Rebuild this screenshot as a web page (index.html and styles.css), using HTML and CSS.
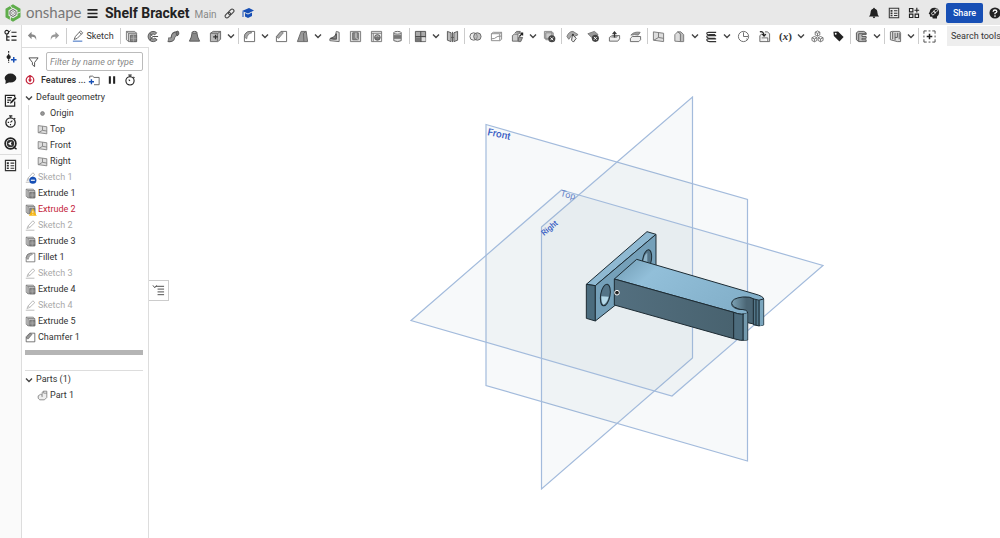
FILE: index.html
```
<!DOCTYPE html>
<html lang="en">
<head>
    <meta charset="UTF-8">
    <meta name="viewport" content="width=device-width, initial-scale=1.0">
    <title>Shelf Bracket | Main</title>
    <link rel="stylesheet" href="styles.css">
</head>
<body>
    <!-- shared icons -->
    <svg class="sprite" aria-hidden="true">
        <symbol id="i-chev" viewBox="0 0 8 8"><path d="M1 2.500l3 3 3-3" fill="none" stroke="#444" stroke-width="1.400"/></symbol>
        <symbol id="i-extrude" viewBox="0 0 14 14"><path d="M1.500 1.500h9L12.500 3.500H4v9L1.500 10.500z" fill="#e4e4e4" stroke="#777"/><path d="M1.500 1.500L4 3.500" stroke="#777"/><path d="M4 3.500h8.500v9H4z" fill="#ddd" stroke="#777"/><path d="M6 5.500h6.500v7H6z" fill="#888" stroke="#666"/><path d="M9.200 5.500v7M6 9h6.500" stroke="#b5b5b5" stroke-width=".7"/></symbol>
        <symbol id="i-sketch" viewBox="0 0 14 14"><path d="M2.500 10.800L4 7.500 10 1l2.500 2.300L6 9.500zM4 7.500l2 2" fill="none" stroke="currentColor"/><path d="M1 13h11" stroke="currentColor"/></symbol>
        <symbol id="i-fillet" viewBox="0 0 14 14"><path d="M1.500 12.500V7Q2 2 7.500 1.500h5v11z" fill="#fff" stroke="#666"/><path d="M1.500 7.500Q2 2 7.500 1.500l2 1.500Q4.500 4 4 9.500z" fill="#aaa" stroke="#666" stroke-width=".7"/></symbol>
        <symbol id="i-plane" viewBox="0 0 14 14"><path d="M1.500 2l11 1.500v9l-11-1.500z" fill="#ddd" stroke="#777"/><path d="M7 3v5l5.500 1M7 8l-5 3" fill="none" stroke="#777"/></symbol>
        <symbol id="i-list" viewBox="0 0 14 14"><path d="M1.500 1.500h11v11h-11zM7 4.500h4M7 7.200h4M7 10h4" fill="none" stroke="#333" stroke-width="1.200"/><path d="M3 4.500h2.200M3 7.200h2.200M3 10h2.200" stroke="#333" stroke-width="1.800"/></symbol>
    </svg>

    <header class="topbar">
        <a class="brand" href="#" aria-label="onshape">
            <svg viewBox="0 0 16 18" class="brand-mark"><path d="M8 2l6 3.500v7L8 16l-6-3.500v-7z" fill="none" stroke="#5fad4b" stroke-width="3"/><path d="M4.500 1l3 3.500M15.500 8l-4 1.500M5 17l.500-4" stroke="#e8e8e8" stroke-width="1"/><path d="M8 5.500l3 1.800v3.400l-3 1.800-3-1.800V7.300z" fill="#f4f4f4" stroke="#666"/><circle cx="8" cy="9" r="1.500" fill="none" stroke="#888" stroke-width=".7"/></svg>
            <span>onshape</span>
        </a>
        <button class="icon-btn menu" aria-label="Menu"><svg viewBox="0 0 12 12"><path d="M.5 2h11M.5 6h11M.5 10h11" stroke="#222" stroke-width="1.800"/></svg></button>
        <h1>Shelf Bracket</h1>
        <span class="workspace">Main</span>
        <button class="icon-btn link" aria-label="Copy link"><svg viewBox="0 0 12 12"><g fill="none" stroke="#444" stroke-width="1.200" transform="rotate(-45 6 6)"><rect x="0" y="4" width="7" height="4" rx="2"/><rect x="5" y="4" width="7" height="4" rx="2"/></g></svg></button>
        <button class="icon-btn" aria-label="Learning center"><svg viewBox="0 0 12 12"><path d="M0 4l7-3 5 2.500-6 3z" fill="#174fb5"/><path d="M3 6v3.500l3 1.500 4-2V5.500L6 7.500z" fill="#174fb5"/><path d="M1 4.500V10" stroke="#174fb5"/></svg></button>
        <div class="top-actions">
            <button class="icon-btn" aria-label="Notifications"><svg viewBox="0 0 14 14"><path d="M7 1q1 0 1 1 3 .8 3 4.500 0 3 2 4.500H1q2-1.500 2-4.500Q3 2.800 6 2q0-1 1-1zM5.500 11.500h3Q8 13.200 7 13.200t-1.500-1.700z" fill="#222"/></svg></button>
            <button class="icon-btn" aria-label="Tasks"><svg><use href="#i-list"/></svg></button>
            <button class="icon-btn" aria-label="Apps"><svg viewBox="0 0 14 14"><path d="M1.700 1.700h4v4h-4zM1.700 8.300h4v4h-4zM8.300 8.300h4v4h-4zM10.300 1v5.500M7.500 3.800H13" fill="none" stroke="#222" stroke-width="1.300"/></svg></button>
            <button class="icon-btn" aria-label="Advisor"><svg viewBox="0 0 14 14"><path d="M7.500 1Q13 1.200 13 6.500q0 3-2.500 4.500v2.500H5.500L5 11.500H2.500L2 8.500.8 8 2 5.500Q2.500 1 7.500 1z" fill="#222"/><g fill="none" stroke="#eee" transform="rotate(-45 7.500 6)"><rect x="3.500" y="4.500" width="5" height="3" rx="1.500"/><rect x="7" y="4.500" width="5" height="3" rx="1.500"/></g></svg></button>
            <button class="share">Share</button>
            <button class="icon-btn help" aria-label="Help"><svg viewBox="0 0 14 14"><circle cx="7" cy="7" r="6.500" fill="#222"/><path d="M4.800 5.500Q5 3.500 7 3.500t2.200 1.800Q9.200 6.500 7 7.300v1.200" fill="none" stroke="#fff" stroke-width="1.500"/><circle cx="7" cy="10.500" r="1" fill="#fff"/></svg></button>
        </div>
    </header>

    <div class="workarea">
        <nav class="rail">
            <div class="rail-group">
                <button aria-label="Feature list"><svg viewBox="0 0 14 14"><path d="M3 6v6h3M3 8.500h3M8 3.500h5.500M8 8h5.500M8 12h5.500" fill="none" stroke="#222" stroke-width="1.300"/><circle cx="3" cy="3.500" r="2" fill="none" stroke="#222" stroke-width="1.200"/><path d="M3 5.500l4-4" stroke="#222"/></svg></button>
                <button aria-label="Versions and history"><svg viewBox="0 0 14 14"><path d="M5 0v13" stroke="#222" stroke-width="1.200" stroke-dasharray="2 1"/><circle cx="5" cy="6.500" r="2.300" fill="#222"/><path d="M10.500 6.500v6M7.500 9.500h6" stroke="#174fb5" stroke-width="1.600"/></svg></button>
                <button aria-label="Comments"><svg viewBox="0 0 14 14"><ellipse cx="7" cy="6.500" rx="6.300" ry="4.800" fill="#222"/><path d="M2 8l-.5 5 5-2.500z" fill="#222"/></svg></button>
                <button aria-label="Notes"><svg viewBox="0 0 14 14"><path d="M11.500 8v5h-10V1.500h10v2M3.500 4h5M3.500 6.500h4M3.500 9h2" fill="none" stroke="#222" stroke-width="1.300"/><path d="M6.500 10.500l.500-2.200L12 3.200l1.500 1.500-5 5z" fill="#222"/></svg></button>
                <button aria-label="Performance"><svg viewBox="0 0 14 14"><circle cx="7" cy="8" r="5" fill="none" stroke="#222" stroke-width="1.400"/><path d="M5.500 1h3.500M7.200 1v2M11 3.500l1.200 1M7 8l2-2M4 8h1.500M7 11V9.800" stroke="#222" stroke-width="1.200"/></svg></button>
                <button aria-label="Learning"><svg viewBox="0 0 14 14"><circle cx="7" cy="7" r="5.800" fill="#fff" stroke="#222" stroke-width="1.800"/><circle cx="7" cy="7" r="4" fill="#333"/><path d="M4.300 7.200l3.700-2.700v5z" fill="#fff"/><circle cx="8.500" cy="7" r=".9" fill="#222"/><path d="M10 10.500l3.500 2.500" stroke="#222" stroke-width="1.500"/></svg></button>
            </div>
            <div class="rail-bottom">
                <button aria-label="Properties"><svg><use href="#i-list"/></svg></button>
            </div>
        </nav>

        <div class="main">
            <div class="toolbar" role="toolbar">
                <button class="tool" aria-label="Undo"><svg viewBox="0 0 14 14"><path d="M6 2L2 6l4 4V7.300q4-.3 5 3.700Q11.800 5 6 4.700z" fill="#888"/></svg></button>
                <button class="tool wide" aria-label="Redo"><svg viewBox="0 0 14 14"><path d="M8 2l4 4-4 4V7.300Q4 7 3 11 2.200 5 8 4.700z" fill="#999"/></svg></button>
                <i class="sep"></i>
                <button class="sketch-btn"><svg viewBox="0 0 14 14"><path d="M2.500 11L4 7.500 10 1l2.500 2.300L6 9.800zM8.500 2.500L11 5" fill="none" stroke="#555"/><path d="M1 13h11" stroke="#3d6fc0" stroke-width="1.200"/></svg>Sketch</button>
                <i class="sep"></i>
                <button class="tool" aria-label="Extrude"><svg><use href="#i-extrude"/></svg></button>
                <button class="tool" aria-label="Revolve"><svg viewBox="0 0 14 14"><path d="M11.500 3A5.500 5.500 0 1 0 12 10.500L9.500 8.800A2.600 2.600 0 1 1 9.500 5.200z" fill="#999" stroke="#555"/><path d="M7 7h6M4 3.500l3 3M4 11l3-3.500" stroke="#444"/></svg></button>
                <button class="tool" aria-label="Sweep"><svg viewBox="0 0 14 14"><path d="M1 10.500q5 .8 5.500-3T12 4" fill="none" stroke="#555" stroke-width="5"/><path d="M1.500 10.500q5 .5 5.200-3T11.500 4" fill="none" stroke="#999" stroke-width="3.200"/><ellipse cx="11.300" cy="3.500" rx="1.500" ry="2.300" fill="#777" stroke="#444" stroke-width=".7"/></svg></button>
                <button class="tool" aria-label="Loft"><svg viewBox="0 0 14 14"><path d="M4.500 2.500h5Q10 8 12.500 12h-11Q4 8 4.500 2.500z" fill="#888" stroke="#555"/><ellipse cx="7" cy="2.500" rx="2.500" ry="1" fill="#bbb" stroke="#555"/></svg></button>
                <button class="tool" aria-label="Thicken"><svg viewBox="0 0 14 14"><path d="M1.500 3.500l3-2h8v8.500l-3 2.500h-8z" fill="#bbb" stroke="#666"/><path d="M1.500 3.500h7.500V12M9 4l3.500-2.500" fill="none" stroke="#666"/><path d="M7 5v5M4.500 7.500h5" stroke="#333" stroke-width="1.300"/></svg></button>
                <button class="drop" aria-label="More create tools"><svg><use href="#i-chev"/></svg></button>
                <i class="sep"></i>
                <button class="tool" aria-label="Fillet"><svg><use href="#i-fillet"/></svg></button>
                <button class="drop" aria-label="More fillets"><svg><use href="#i-chev"/></svg></button>
                <button class="tool" aria-label="Chamfer"><svg viewBox="0 0 14 14"><path d="M1.500 12.500V7l5-5.500h6v11z" fill="#fff" stroke="#666"/><path d="M1.500 7.500l5-6L9 3 4 9z" fill="#aaa" stroke="#666" stroke-width=".7"/></svg></button>
                <button class="tool" aria-label="Draft"><svg viewBox="0 0 14 14"><path d="M1.500 12.500l4-11h5.500l1.500 11z" fill="#999" stroke="#666"/><path d="M8.500 12.500l-.5-9 3-2" fill="none" stroke="#666"/></svg></button>
                <button class="drop" aria-label="More drafts"><svg><use href="#i-chev"/></svg></button>
                <button class="tool" aria-label="Rib"><svg viewBox="0 0 14 14"><path d="M9 1.500l3 1v10l-10-1V9.500l5 .500z" fill="#ddd" stroke="#666"/><path d="M9 4v6L2.500 9Q7.500 8 9 4z" fill="#888" stroke="#444"/></svg></button>
                <button class="tool" aria-label="Shell"><svg viewBox="0 0 14 14"><path d="M1.500 1.500h11v11h-11z" fill="#ddd" stroke="#777"/><path d="M4 3h6v7.500H4z" fill="#888" stroke="#666"/><path d="M7.500 3v5L10 10.500" fill="none" stroke="#ddd"/></svg></button>
                <button class="tool" aria-label="Hole"><svg viewBox="0 0 14 14"><path d="M1.500 1.500h11v11h-11zM3.500 3.500v9M1.500 3.500h11" fill="#eee" stroke="#777"/><circle cx="8" cy="8" r="3" fill="#777" stroke="#555"/><path d="M6 7a2.500 1.500 0 0 1 4 0" stroke="#ccc" fill="none"/></svg></button>
                <button class="tool" aria-label="Thread"><svg viewBox="0 0 14 14"><path d="M3 3v8.500q4 2 8 0V3" fill="#ddd" stroke="#666"/><ellipse cx="7" cy="3" rx="4" ry="1.500" fill="#eee" stroke="#666"/><path d="M3 5.500h8v4H3z" fill="#777"/></svg></button>
                <i class="sep"></i>
                <button class="tool" aria-label="Linear pattern"><svg viewBox="0 0 14 14"><path d="M1.500 1.500h11v11h-11z" fill="#aaa" stroke="#555"/><path d="M2 8h4.500v4.500H2z" fill="#777"/><path d="M8.500 8h4v4h-4z" fill="#ddd"/><path d="M7.300 1.500v11M1.500 7h11" stroke="#444"/></svg></button>
                <button class="drop" aria-label="More patterns"><svg><use href="#i-chev"/></svg></button>
                <button class="tool" aria-label="Mirror"><svg viewBox="0 0 14 14"><path d="M1.500 1.500l4 1.500v9.500l-4-1.500zM8.500 3l4-1.500V11l-4 1.500z" fill="#bbb" stroke="#555"/><path d="M7 2v11M5.500 8h3" fill="none" stroke="#555"/></svg></button>
                <i class="sep"></i>
                <button class="tool" aria-label="Boolean"><svg viewBox="0 0 14 14"><circle cx="5" cy="7" r="4" fill="#eee" stroke="#666"/><circle cx="9" cy="7" r="4" fill="#999" fill-opacity=".6" stroke="#666"/></svg></button>
                <button class="tool" aria-label="Split"><svg viewBox="0 0 14 14"><path d="M1.500 4l2-1.500h9v7.500l-2 1.500h-9zM1.500 4h9l2-1.500M10.500 4v7.500M1.500 9.500q4 0 5-1.500t6-1.500" fill="none" stroke="#888"/></svg></button>
                <button class="tool" aria-label="Transform"><svg viewBox="0 0 14 14"><path d="M1.500 6l2-1.500h4V12h-6z" fill="#ccc" stroke="#666"/><path d="M4 3.500l2-2h4l-1.500 3M8 8h4.500l-2 4.500H8z" fill="#999" stroke="#666"/><path d="M9 7l3.500-3.500M12.500 6V3.300H10" fill="none" stroke="#222" stroke-width="1.300"/></svg></button>
                <button class="drop" aria-label="More transforms"><svg><use href="#i-chev"/></svg></button>
                <button class="tool" aria-label="Delete part"><svg viewBox="0 0 14 14"><path d="M1.500 1.500h8V9h-8zM3 3h8v7.500H3z" fill="#ccc" stroke="#888"/><circle cx="9.500" cy="9.500" r="3.800" fill="#444"/><path d="M8 8l3 3M11 8l-3 3" stroke="#fff"/></svg></button>
                <i class="sep"></i>
                <button class="tool" aria-label="Modify fillet"><svg viewBox="0 0 14 14"><path d="M1 7q2-5.500 6.500-5.500L13 5l-4 2-3-1-3 4z" fill="#aaa" stroke="#777"/><path d="M7 5l-1 6 2 2 3-4z" fill="#eee" stroke="#444"/><circle cx="7.500" cy="5" r="1" fill="#333"/></svg></button>
                <button class="tool" aria-label="Delete face"><svg viewBox="0 0 14 14"><path d="M1 4l7-2.500L12 5 5 8z" fill="#999" stroke="#777"/><circle cx="9" cy="9" r="3.800" fill="#444"/><path d="M7.500 7.500l3 3M10.500 7.500l-3 3" stroke="#fff"/></svg></button>
                <button class="tool" aria-label="Move face"><svg viewBox="0 0 14 14"><path d="M1.500 8l3-2h8v3.500l-2 2.500h-9z" fill="#eee" stroke="#666"/><path d="M3 8l2-1.500h6L9 8.500z" fill="#999"/><path d="M7 8V2.500M5 4.500l2-2.500 2 2.500" fill="none" stroke="#333" stroke-width="1.300"/></svg></button>
                <button class="tool" aria-label="Replace face"><svg viewBox="0 0 14 14"><path d="M1.500 9l2-2h9v3.500l-2 2h-9z" fill="#eee" stroke="#666"/><path d="M2 5.500q3-4 10-3l-2 3q-4-1-8 0z" fill="#999" stroke="#777"/></svg></button>
                <i class="sep"></i>
                <button class="tool" aria-label="Plane"><svg><use href="#i-plane"/></svg></button>
                <button class="tool" aria-label="Surface"><svg viewBox="0 0 14 14"><path d="M2 12V5l3-3 3 2v8.500z" fill="#ddd" stroke="#777"/><path d="M5 2h3.500L11.500 5v7.500H8V4z" fill="#bbb" stroke="#777"/></svg></button>
                <button class="drop" aria-label="More surfaces"><svg><use href="#i-chev"/></svg></button>
                <button class="tool" aria-label="Helix"><svg viewBox="0 0 14 14"><path d="M12 2.500H4Q1.500 2.500 2 4t3 1h6M12 6H4Q1.500 6 2 7.500T5 9h6M12 9.500H4q-2.500 0-2 1.500t3 1.500h7" fill="none" stroke="#333" stroke-width="1.200"/></svg></button>
                <button class="drop" aria-label="More curves"><svg><use href="#i-chev"/></svg></button>
                <button class="tool" aria-label="Projected curve"><svg viewBox="0 0 14 14"><circle cx="7" cy="7" r="5.500" fill="none" stroke="#666"/><path d="M7 2.500V7h5M10 9.500l1.500 1" fill="none" stroke="#666"/></svg></button>
                <button class="tool" aria-label="Derived"><svg viewBox="0 0 14 14"><path d="M2 6V12.500h10.500V4L10 2H7.500M2 6l2.500-2M4 8.500h6.500v4" fill="#eee" stroke="#666"/><path d="M2 2q4-1 4.500 4M4.500 4.500l2 2 2-2" fill="none" stroke="#222" stroke-width="1.300"/></svg></button>
                <button class="tool var" aria-label="Variable">(<em>x</em>)</button>
                <button class="drop" aria-label="More variables"><svg><use href="#i-chev"/></svg></button>
                <button class="tool" aria-label="Composite part"><svg viewBox="0 0 14 14"><g fill="none" stroke="#666" stroke-width=".9"><path d="M7 1l2.500 1.300v3L7 6.700 4.500 5.300v-3zM4.500 2.300L7 3.600l2.500-1.300M7 3.600v3"/><path d="M3.700 7l2.600 1.300v3L3.700 12.700 1 11.300v-3zM1 8.300l2.700 1.300 2.600-1.300M3.700 9.600v3"/><path d="M10.300 7L13 8.300v3l-2.700 1.400-2.600-1.400v-3zM7.700 8.300l2.600 1.300L13 8.300M10.300 9.600v3"/></g></svg></button>
                <button class="tool" aria-label="Tag"><svg viewBox="0 0 14 14"><path d="M1.500 2l5-.500 6 6-4.500 5-6-6z" fill="#222"/><circle cx="4" cy="4" r="1" fill="#fff"/></svg></button>
                <i class="sep"></i>
                <button class="tool" aria-label="Sheet metal"><svg viewBox="0 0 14 14"><path d="M1.500 3l2-1.500h6L12 3v2H7.500v2H12v2H7.500v1.500H12v2H4l-2.500-2z" fill="#bbb" stroke="#555"/><path d="M4 12V4h8" fill="none" stroke="#555"/></svg></button>
                <button class="drop" aria-label="More sheet metal tools"><svg><use href="#i-chev"/></svg></button>
                <i class="sep"></i>
                <button class="tool" aria-label="Frame"><svg viewBox="0 0 14 14"><path d="M1.500 2l2-.5h8l1 2v9H9l-7.500-2z" fill="#ddd" stroke="#666"/><path d="M4 2v8M6.500 3v8M9 3v5H6.500M11 3v7" fill="none" stroke="#555"/></svg></button>
                <button class="drop" aria-label="More frame tools"><svg><use href="#i-chev"/></svg></button>
                <i class="sep"></i>
                <button class="tool" aria-label="Add custom features"><svg viewBox="0 0 14 14"><path d="M1 4V1h3M10 1h3v3M13 10v3h-3M4 13H1v-3M6 1h2M6 13h2M1 6v2M13 6v2" fill="none" stroke="#444"/><path d="M7 4v6M4 7h6" stroke="#222" stroke-width="1.600"/></svg></button>
                <button class="search">Search tools</button>
            </div>

            <div class="content">
                <aside class="panel">
                    <div class="filter">
                        <svg viewBox="0 0 12 12"><path d="M1 1.500h10L7.200 6.500V11L4.800 9V6.500z" fill="none" stroke="#444"/></svg>
                        <input type="text" aria-label="Filter features" placeholder="Filter by name or type">
                    </div>
                    <div class="features-head">
                        <svg class="err" viewBox="0 0 10 10"><circle cx="5" cy="5" r="3.800" fill="#fff" stroke="#c4233b" stroke-width="1.200"/><path d="M5 0v5.500" stroke="#c4233b" stroke-width="1.500"/><path d="M3 4.500h4L5 7.500z" fill="#c4233b"/></svg>
                        <h2>Features ...</h2>
                        <button class="icon-btn" aria-label="Add folder"><svg viewBox="0 0 14 14"><path d="M2 5V2.500h3.500L7 4h6v8.500H7" fill="none" stroke="#555"/><path d="M4 6v6M1 9h6" stroke="#174fb5" stroke-width="1.600"/></svg></button>
                        <button class="icon-btn" aria-label="Pause regeneration"><svg viewBox="0 0 14 14"><path d="M4.500 2.500v9M9.500 2.500v9" stroke="#222" stroke-width="2.400"/></svg></button>
                        <button class="icon-btn" aria-label="Regeneration times"><svg viewBox="0 0 14 14"><circle cx="7" cy="8" r="4.800" fill="none" stroke="#222" stroke-width="1.300"/><path d="M5 1.200h4M7 1v2.500M11 3.500l1.200 1M7 8L5.500 6.500" stroke="#222" stroke-width="1.200"/></svg></button>
                    </div>
                    <ul class="tree">
                        <li class="group"><svg class="chev"><use href="#i-chev"/></svg>Default geometry
                            <ul>
                                <li><svg viewBox="0 0 14 14"><circle cx="7" cy="7" r="2.400" fill="#999" stroke="#777"/></svg>Origin</li>
                                <li><svg><use href="#i-plane"/></svg>Top</li>
                                <li><svg><use href="#i-plane"/></svg>Front</li>
                                <li><svg><use href="#i-plane"/></svg>Right</li>
                            </ul>
                        </li>
                        <li class="muted"><svg class="badged" viewBox="0 0 14 14"><use href="#i-sketch" width="14" height="14"/><circle cx="10" cy="10.500" r="4.500" fill="#174fb5"/><path d="M7.500 10.500h5" stroke="#fff" stroke-width="1.500"/></svg>Sketch 1</li>
                        <li><svg><use href="#i-extrude"/></svg>Extrude 1</li>
                        <li class="error"><svg class="badged" viewBox="0 0 14 14"><use href="#i-extrude" width="14" height="14"/><path d="M10 5.500l5 9.500H5z" fill="#f5b616"/><path d="M10 8.500v3M10 12.500v1.200" stroke="#fff"/></svg>Extrude 2</li>
                        <li class="muted"><svg><use href="#i-sketch"/></svg>Sketch 2</li>
                        <li><svg><use href="#i-extrude"/></svg>Extrude 3</li>
                        <li><svg><use href="#i-fillet"/></svg>Fillet 1</li>
                        <li class="muted"><svg><use href="#i-sketch"/></svg>Sketch 3</li>
                        <li><svg><use href="#i-extrude"/></svg>Extrude 4</li>
                        <li class="muted"><svg><use href="#i-sketch"/></svg>Sketch 4</li>
                        <li><svg><use href="#i-extrude"/></svg>Extrude 5</li>
                        <li><svg viewBox="0 0 14 14"><path d="M1.500 12.500V6l4.500-4.500h6.500v11z" fill="#fff" stroke="#555"/><path d="M1.500 7.500l5-6L9 3 4 9z" fill="#999" stroke="#555" stroke-width=".7"/></svg>Chamfer 1</li>
                    </ul>
                    <div class="rollback"></div>
                    <ul class="tree parts">
                        <li class="group"><svg class="chev"><use href="#i-chev"/></svg>Parts (1)
                            <ul>
                                <li><svg viewBox="0 0 14 14"><path d="M1.500 7.500l3-2 2 1V3l2-1.500h4v8l-3 3H3.500l-2-2zM6.500 6.500V9M8.500 1.500V4h4" fill="#eee" stroke="#777"/></svg>Part 1</li>
                            </ul>
                        </li>
                    </ul>
                </aside>

                <main class="stage">
                    <button class="toggle" aria-label="Toggle feature list"><svg viewBox="0 0 14 14"><path d="M4 2.500h9M6 5.500h7M6 8.500h7M6 11.500h7" stroke="#444"/><path d="M1 1.500L3 4l2-2.500" fill="none" stroke="#444"/></svg></button>
                    <svg class="view" viewBox="149 47 851 491" role="img" aria-label="Shelf bracket model">
                        <!-- reference planes -->
                        <g class="planes">
                            <path d="M486 124.500L747.500 199.500V461L486 385.500z"/>
                            <path d="M541.500 227L692.500 97V358L541.500 489z"/>
                            <path d="M561.500 190L823 265.500 672 396 411 320.500z"/>
                        </g>
                        <g class="plane-names">
                            <text x="487" y="135" transform="rotate(12 487 135)">Front</text>
                            <text class="far" x="560" y="196" transform="rotate(14 560 196)">Top</text>
                            <text class="side" x="544" y="236" transform="rotate(-40 544 236)">Right</text>
                        </g>
                        <!-- bracket -->
                        <g class="part" transform="translate(575 225) scale(.33333)">
                            <path fill="#8fb9d2" d="M34 178L216 20l27 8L61 182z"/>
                            <path fill="#4b6c7e" d="M34 178l27 4v106l-27-8z"/>
                            <path fill="#75a0b9" d="M61 182L243 28v116L61 288z"/>
                            <ellipse fill="#547487" cx="91" cy="210" rx="14" ry="33" transform="rotate(10 91 210)"/>
                            <path fill="#b4d8e8" stroke="none" d="M79 214l22 1q-5 20-16 24-6-5-6-25z"/>
                            <ellipse fill="#547487" cx="216" cy="105" rx="13" ry="31" transform="rotate(10 216 105)"/>
                            <path fill="#8fb4c8" stroke="none" d="M208 95q4-10 9-12v28l-12-3z"/>
                            <!-- slot walls, then the far prong -->
                            <path fill="url(#slot)" d="M468 230q10-20 50-17l27 10v76l-27-6-8-36q-42-8-42-27z"/>
                            <path fill="#527689" d="M535 220q18 8 31 2v78q-13 6-31-1z"/>
                            <path fill="#7aa5bd" stroke="none" d="M555 226l10-3v77l-10 3z"/>
                            <path fill="none" d="M543 224v76M552 226v76"/>
                            <path fill="url(#topFace)" d="M118 162L185 103l355 104q26 7 26 15-14 7-29 0-12-8-34-6-33 4-33 19 0 14 22 18 27 0 26 11-17 9-42-2z"/>
                            <path fill="url(#frontFace)" d="M118 162l358 100v79L118 240z"/>
                            <path fill="#4d6c7d" d="M476 262q25 10 42 2v81q-22 4-42-4z"/>
                            <path fill="#7299ad" stroke="none" d="M507 267l10-3v80l-10 2z"/>
                            <path fill="none" d="M504 267v79"/>
                            <circle cx="126" cy="203" r="7" fill="#222" stroke="#fff" stroke-width="3"/>
                        </g>
                        <defs>
                            <linearGradient id="topFace" x1="0" y1="0" x2="1" y2=".4">
                                <stop offset="0" stop-color="#6f9ab2"/>
                                <stop offset=".3" stop-color="#92bfd9"/>
                                <stop offset="1" stop-color="#83b0ca"/>
                            </linearGradient>
                            <linearGradient id="frontFace">
                                <stop offset="0" stop-color="#536f7f"/>
                                <stop offset="1" stop-color="#48626f"/>
                            </linearGradient>
                            <linearGradient id="slot">
                                <stop offset="0" stop-color="#7fa5b8"/>
                                <stop offset=".6" stop-color="#4b6675"/>
                            </linearGradient>
                        </defs>
                    </svg>
                </main>
            </div>
        </div>
    </div>
</body>
</html>
```

FILE: styles.css
```
* {
    box-sizing: border-box;
}
body {
    font-family: Roboto, 'Liberation Sans', sans-serif;
    font-size: 9px;
    color: #333;
    margin: 0;
    height: 100vh;
    display: flex;
    flex-direction: column;
    overflow: hidden;
    background: #fff;
}
button {
    font: inherit;
    color: inherit;
    background: none;
    border: none;
    padding: 0;
    flex: none;
    display: flex;
    align-items: center;
    justify-content: center;
    cursor: pointer;
}
ul {
    list-style: none;
    margin: 0;
    padding: 0;
}
.sprite {
    position: absolute;
    width: 0;
    height: 0;
}

/* top bar */
.topbar {
    display: flex;
    align-items: center;
    height: 25px;
    flex: none;
    padding-left: 5px;
    padding-top: 1px;
    background: #e8e8e8;
}
.brand {
    display: flex;
    align-items: center;
    gap: 5px;
    width: 82px;
    color: #777;
    text-decoration: none;
    font-family: Lato, sans-serif;
    font-size: 15px;
    line-height: 20px;
}
.brand span {
    padding-bottom: 2px;
}
.brand-mark {
    width: 16px;
    height: 18px;
}
.icon-btn svg {
    width: 12px;
    height: 12px;
}
.menu {
    margin-right: 7px;
}
h1 {
    margin: 0;
    font-size: 14px;
    line-height: 20px;
    color: #222;
}
.workspace {
    margin-left: 5px;
    padding-top: 3px;
    font-size: 10px;
    color: #888;
}
.link {
    margin: 0 7px;
}
.link svg,
.menu svg {
    width: 11px;
    height: 11px;
}
.top-actions {
    display: flex;
    align-items: center;
    gap: 8px;
    margin-left: auto;
    margin-right: -1px;
}
.share {
    width: 37px;
    height: 20px;
    border-radius: 2px;
    background: #174fb5;
    color: #fff;
    font-weight: 500;
    margin: 0 -2px;
}

.workarea {
    flex: 1;
    display: flex;
    min-height: 0;
}

/* left icon rail */
.rail {
    width: 22px;
    flex: none;
    background: #fafafa;
    border-right: 1px solid #ddd;
}
.rail-group {
    height: 130px;
    display: flex;
    flex-direction: column;
    border-bottom: 1px solid #ddd;
}
.rail button {
    width: 20px;
    flex: 1;
}
.rail-bottom {
    height: 21px;
    display: flex;
}
.rail svg {
    width: 13px;
    height: 13px;
}

.main {
    flex: 1;
    min-width: 0;
    display: flex;
    flex-direction: column;
}

/* toolbar */
.toolbar {
    display: flex;
    align-items: center;
    height: 22px;
    flex: none;
    overflow: hidden;
}
.tool {
    width: 21px;
    height: 20px;
}
.tool.wide {
    width: 22px;
}
.tool svg {
    width: 13px;
    height: 13px;
}
.drop {
    width: 9px;
    height: 20px;
    margin-right: 2px;
}
.drop svg,
.chev {
    width: 8px;
    height: 8px;
}
.sep {
    width: 1px;
    height: 16px;
    flex: none;
    margin-left: 1px;
    background: #ccc;
}
.sketch-btn {
    gap: 2px;
    width: 52px;
    height: 20px;
}
.sketch-btn svg {
    width: 12px;
    height: 12px;
}
.var {
    font: bold 11px 'Liberation Serif', serif;
}
.search {
    flex: 1;
    justify-content: flex-start;
    white-space: nowrap;
    height: 20px;
    margin-left: 7px;
    padding-left: 4px;
    background: #eee;
}

.content {
    flex: 1;
    display: flex;
    min-height: 0;
}

/* feature panel */
.panel {
    width: 127px;
    flex: none;
    border-top: 1px solid #ddd;
    border-right: 1px solid #ddd;
    padding: 4px 5px 0 3px;
}
.filter {
    display: flex;
    align-items: center;
    gap: 7px;
    padding-left: 3px;
}
.filter svg {
    width: 11px;
    height: 12px;
    flex: none;
}
.filter input {
    flex: 1;
    min-width: 0;
    height: 19px;
    border: 1px solid #bbb;
    border-radius: 2px;
    padding: 0 3px;
    font: italic 9px Roboto, sans-serif;
}
.filter input::placeholder {
    color: #888;
}
.features-head {
    display: flex;
    align-items: center;
    height: 18px;
    gap: 6px;
}
.features-head .err {
    width: 10px;
    height: 10px;
}
.features-head h2 {
    margin: 0;
    font-size: 9px;
    font-weight: 500;
    width: 41px;
    white-space: nowrap;
}
.tree li {
    line-height: 16px;
    white-space: nowrap;
}
.tree svg {
    width: 11px;
    height: 11px;
    margin-right: 2px;
    vertical-align: middle;
}
.tree svg.chev {
    width: 8px;
    height: 8px;
    margin-right: 3px;
}
.tree svg.badged {
    overflow: visible;
}
.tree ul {
    margin-left: 3px;
    padding-left: 8px;
    border-left: 1px solid #ddd;
}
.tree .muted {
    color: #aaa;
}
.tree .error {
    color: #c4233b;
}
.rollback {
    height: 5px;
    margin: 5px 0 15px;
    background: #b5b5b5;
}
.parts {
    border-top: 1px solid #ddd;
}
.parts ul {
    border-color: transparent;
}

/* 3d view */
.stage {
    flex: 1;
    min-width: 0;
    position: relative;
}
.view {
    display: block;
    width: 100%;
    height: 100%;
}
.toggle {
    position: absolute;
    left: 0;
    top: 233px;
    width: 20px;
    height: 21px;
    border: 1px solid #ccc;
    border-left: none;
    background: #fff;
}
.toggle svg {
    width: 13px;
    height: 13px;
}
.planes {
    fill: rgba(120, 150, 175, 0.06);
    stroke: #a3bbdc;
    stroke-width: 1.2;
}
.plane-names {
    fill: #3a5fc4;
    font-size: 10px;
    font-weight: 500;
}
.plane-names .far {
    fill: #6482c8;
    font-size: 9px;
    font-weight: 400;
}
.plane-names .side {
    font-size: 8px;
}
.part {
    stroke: #1d2b33;
    stroke-width: 3;
    stroke-linejoin: round;
}
```
